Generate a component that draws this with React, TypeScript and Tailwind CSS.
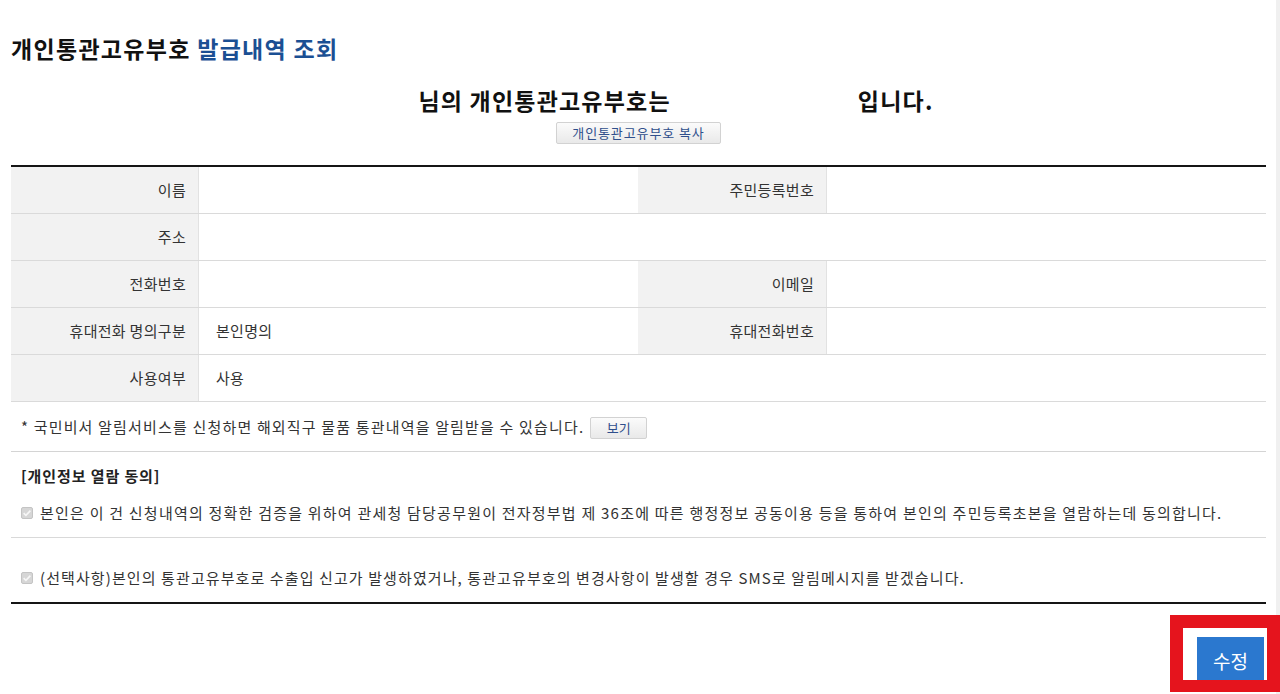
import React from "react";

function Check() {
  return (
    <svg width="12" height="12" viewBox="0 0 12 12" className="shrink-0">
      <rect x="0.5" y="0.5" width="11" height="11" rx="1.5" fill="#d6d6d6" stroke="#c4c4c4" />
      <path d="M2.6 6.2 L4.9 8.4 L9.4 3.6" fill="none" stroke="#f7f7f7" strokeWidth="1.6" />
    </svg>
  );
}

function Label({ children }: { children: React.ReactNode }) {
  return (
    <div className="flex h-[46px] items-center justify-end border-r border-[#e2e2e2] bg-[#f2f2f2] pr-[12px] text-[#333]">
      {children}
    </div>
  );
}

function Value({ children, span }: { children?: React.ReactNode; span?: boolean }) {
  return (
    <div className={`flex h-[46px] items-center pl-[17px] text-[#333] ${span ? "col-span-3" : ""}`}>
      {children}
    </div>
  );
}

export default function App() {
  return (
    <div className="relative flex h-[694px] w-[1280px] overflow-hidden bg-white font-['Noto_Sans_CJK_KR',sans-serif]">
      <div className="flex w-[1276px] flex-col pl-[11px] pr-[10px] pt-[33px]">
        <h1 className="text-[23px] font-bold leading-[30px] tracking-[1.3px] text-[#111]">
          개인통관고유부호 <span className="text-[#1b4f93]">발급내역 조회</span>
        </h1>

        <div className="mt-[22px] flex justify-center text-[23px] font-bold leading-[30px] tracking-[1.2px] text-[#111]">
          <span className="w-[75px]" />
          <span>님의 개인통관고유부호는</span>
          <span className="w-[187px]" />
          <span>입니다.</span>
        </div>

        <div className="mt-[7px] flex justify-center">
          <button className="h-[22px] w-[165px] rounded-[2px] border border-[#d2d2d2] bg-gradient-to-b from-[#fbfbfb] to-[#e9e9e9] text-[13px] leading-[20px] tracking-[0.9px] text-[#2f4f8c]">
            개인통관고유부호 복사
          </button>
        </div>

        <div className="mt-[21px] h-[2px] bg-[#151515]" />

        <div className="grid grid-cols-[188px_1fr_189px_1fr] text-[15px] leading-[22px] tracking-[0.3px]">
          <Label>이름</Label>
          <Value />
          <Label>주민등록번호</Label>
          <Value />
          <div className="col-span-4 h-px bg-[#dadada]" />
          <Label>주소</Label>
          <Value span />
          <div className="col-span-4 h-px bg-[#dadada]" />
          <Label>전화번호</Label>
          <Value />
          <Label>이메일</Label>
          <Value />
          <div className="col-span-4 h-px bg-[#dadada]" />
          <Label>휴대전화 명의구분</Label>
          <Value>본인명의</Value>
          <Label>휴대전화번호</Label>
          <Value />
          <div className="col-span-4 h-px bg-[#dadada]" />
          <Label>사용여부</Label>
          <Value span>사용</Value>
          <div className="col-span-4 h-px bg-[#dadada]" />
        </div>

        <div className="flex h-[50px] items-center border-b border-[#d4d4d4] pl-[10px] text-[15px] leading-[22px] tracking-[1.17px] text-[#333]">
          <span>* 국민비서 알림서비스를 신청하면 해외직구 물품 통관내역을 알림받을 수 있습니다.</span>
          <button className="ml-[6px] mt-[2px] h-[22px] w-[57px] rounded-[2px] border border-[#d2d2d2] bg-gradient-to-b from-[#fbfbfb] to-[#e9e9e9] text-[13px] leading-[20px] tracking-normal text-[#2f4f8c]">
            보기
          </button>
        </div>

        <div className="border-b border-[#d9d9d9] pb-[13px] pl-[10px] pt-[13px] text-[15px] leading-[22px] text-[#333]">
          <div className="font-bold tracking-[0.9px] text-[#222]">[개인정보 열람 동의]</div>
          <div className="mt-[15px] flex items-center gap-[7px] tracking-[1.22px]">
            <Check />
            <span>
              본인은 이 건 신청내역의 정확한 검증을 위하여 관세청 담당공무원이 전자정부법 제 36조에 따른 행정정보 공동이용 등을 통하여 본인의 주민등록초본을 열람하는데 동의합니다.
            </span>
          </div>
        </div>

        <div className="pb-[13px] pl-[10px] pt-[29px] text-[15px] leading-[22px] text-[#333]">
          <div className="flex items-center gap-[7px] tracking-[1.1px]">
            <Check />
            <span>
              (선택사항)본인의 통관고유부호로 수출입 신고가 발생하였거나, 통관고유부호의 변경사항이 발생할 경우 SMS로 알림메시지를 받겠습니다.
            </span>
          </div>
        </div>

        <div className="h-[2px] bg-[#151515]" />

        <div className="mt-[33px] flex justify-end pr-[2px]">
          <button className="h-[47px] w-[67px] bg-[#2b78cf] text-[19px] leading-[24px] text-white">
            수정
          </button>
        </div>
      </div>

      <div className="w-[4px] bg-[#f0f0f0]" />

      <div className="pointer-events-none absolute left-[1170px] top-[615px] h-[77px] w-[110px] border-[13px] border-b-[12px] border-[#e5141d]" />
    </div>
  );
}
